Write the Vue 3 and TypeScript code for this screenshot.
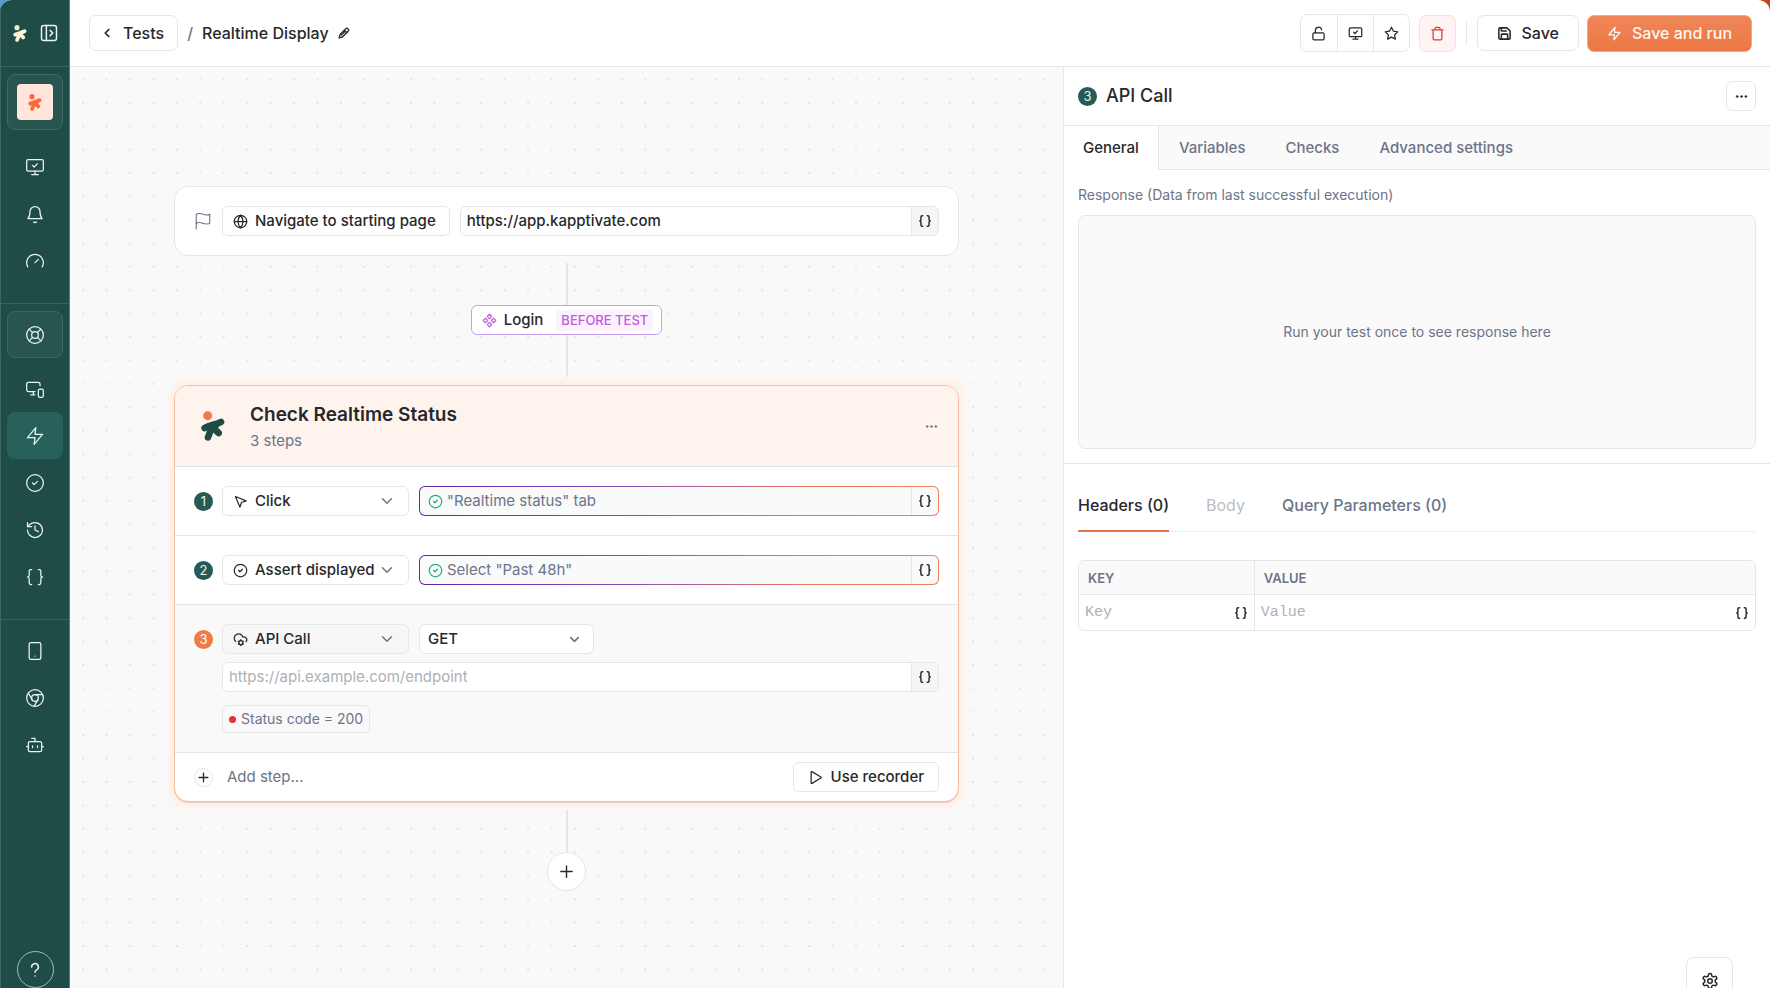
<script setup lang="ts">
import { h, ref } from 'vue'

const icons: Record<string, string> = {
  panel: '<rect x="2" y="2" width="20" height="20" rx="3"/><path d="M8.500 2v20M13.500 8.500l3.500 3.500-3.500 3.500"/>',
  monitorCheck: '<path d="m9 10 2 2 4-4"/><rect x="2" y="3" width="20" height="14" rx="2"/><path d="M12 17v4M8 21h8"/>',
  bell: '<path d="M10.300 21.500a2 2 0 0 0 3.400 0"/><path d="M3.500 17.500h17c-1.500-1.600-2.500-3.500-2.500-8.500a6 6 0 0 0-12 0c0 5-1 6.900-2.500 8.500z"/>',
  gauge: '<path d="m12 14 4-4"/><path d="M3.340 19a10 10 0 1 1 17.320 0"/>',
  buoy: '<circle cx="12" cy="12" r="10"/><circle cx="12" cy="12" r="4"/><path d="m4.930 4.930 4.240 4.240M14.830 9.170l4.240-4.240M14.830 14.830l4.240 4.240M9.170 14.830l-4.240 4.240"/>',
  devices: '<path d="M18 8V6a2 2 0 0 0-2-2H4a2 2 0 0 0-2 2v7a2 2 0 0 0 2 2h8"/><path d="M10 19v-4M7 19h5"/><rect x="16" y="12" width="6" height="10" rx="2"/>',
  zap: '<path d="M13 2 3 14h9l-1 8 10-12h-9z"/>',
  check: '<circle cx="12" cy="12" r="10"/><path d="m9 12 2 2 4-4"/>',
  history: '<path d="M3 12a9 9 0 1 0 9-9 9.750 9.750 0 0 0-6.740 2.740L3 8"/><path d="M3 3v5h5M12 7v5l4 2"/>',
  braces: '<path d="M8 3H7a2 2 0 0 0-2 2v5a2 2 0 0 1-2 2 2 2 0 0 1 2 2v5c0 1.100.9 2 2 2h1"/><path d="M16 21h1a2 2 0 0 0 2-2v-5c0-1.100.9-2 2-2a2 2 0 0 1-2-2V5a2 2 0 0 0-2-2h-1"/>',
  phone: '<rect x="5" y="2" width="14" height="20" rx="2"/><path d="M12 18h.01"/>',
  chrome: '<circle cx="12" cy="12" r="10"/><circle cx="12" cy="12" r="4"/><path d="M21.170 8H12M3.950 6.060 8.540 14M10.880 21.940 15.460 14"/>',
  bot: '<path d="M12 8V4H8"/><rect x="4" y="8" width="16" height="12" rx="2"/><path d="M2 14h2M20 14h2M15 13v2M9 13v2"/>',
  help: '<path d="M7.500 8a4.500 4.500 0 1 1 6.300 4.100c-1.200.6-1.800 1.300-1.800 2.900"/><path d="M12 20h.01"/>',
  chevronLeft: '<path d="m15 18-6-6 6-6"/>',
  chevronDown: '<path d="m6 9 6 6 6-6"/>',
  pencil: '<path d="M4 20l1.500-6L16 3.500a3 3 0 0 1 4.500 4.500L10 18.500z"/><path d="M13.500 6l4.500 4.500M8 15l7-7"/>',
  lockOpen: '<rect x="3" y="11" width="18" height="11" rx="2"/><path d="M7 11V7a5 5 0 0 1 9.900-1"/>',
  star: '<path d="M12 2l3.090 6.260L22 9.270l-5 4.870 1.180 6.880L12 17.770l-6.180 3.250L7 14.140 2 9.270l6.910-1.010z"/>',
  trash: '<path d="M3 6h18M19 6v14a2 2 0 0 1-2 2H7a2 2 0 0 1-2-2V6M8 6V4a2 2 0 0 1 2-2h4a2 2 0 0 1 2 2v2"/>',
  save: '<path d="M15.200 3a2 2 0 0 1 1.400.6l3.800 3.800a2 2 0 0 1 .6 1.400V19a2 2 0 0 1-2 2H5a2 2 0 0 1-2-2V5a2 2 0 0 1 2-2z"/><path d="M17 21v-7a1 1 0 0 0-1-1H8a1 1 0 0 0-1 1v7M7 3v4a1 1 0 0 0 1 1h7"/>',
  flag: '<path d="M3 15s1-1 4.500-1 5 2 9 2 4.500-1 4.500-1V3s-1 1-4.500 1-5-2-9-2S3 3 3 3z"/><path d="M3 22.500V15"/>',
  globe: '<circle cx="12" cy="12" r="10"/><path d="M12 2a14.500 14.500 0 0 0 0 20 14.500 14.500 0 0 0 0-20M2 12h20"/>',
  component: '<path d="M5.500 8.500 9 12l-3.500 3.500L2 12zM12 2l3.500 3.500L12 9 8.500 5.500zM18.500 8.500 22 12l-3.500 3.500L15 12zM12 15l3.500 3.500L12 22l-3.500-3.500z"/>',
  cursor: '<path d="m4 4 7.070 17 2.510-7.390L21 11.070z"/>',
  cloud: '<path d="M4.200 15.100A7 7 0 1 1 15.710 8h1.790a4.500 4.500 0 0 1 3.500 7.400"/><circle cx="12.500" cy="17" r="3.200"/><path d="M12.500 12.300v1.500M12.500 20.200v1.500M8.400 14.700l1.300.7M15.300 18.600l1.300.7M8.400 19.300l1.300-.7M15.300 15.400l1.300-.7"/>',
  play: '<path d="M5 3.500v17a1 1 0 0 0 1.500.9l14-8.500a1 1 0 0 0 0-1.800l-14-8.500A1 1 0 0 0 5 3.500z"/>',
  plus: '<path d="M12 4v16M4 12h16"/>',
  dots: '<g fill="currentColor"><circle cx="4" cy="12" r="1.800"/><circle cx="12" cy="12" r="1.800"/><circle cx="20" cy="12" r="1.800"/></g>',
  gear: '<path d="M12.220 2h-.44a2 2 0 0 0-2 2v.18a2 2 0 0 1-1 1.730l-.43.25a2 2 0 0 1-2 0l-.15-.08a2 2 0 0 0-2.730.73l-.22.38a2 2 0 0 0 .73 2.730l.15.1a2 2 0 0 1 1 1.720v.51a2 2 0 0 1-1 1.740l-.15.09a2 2 0 0 0-.73 2.730l.22.38a2 2 0 0 0 2.730.73l.15-.08a2 2 0 0 1 2 0l.43.25a2 2 0 0 1 1 1.730V20a2 2 0 0 0 2 2h.44a2 2 0 0 0 2-2v-.18a2 2 0 0 1 1-1.730l.43-.25a2 2 0 0 1 2 0l.15.08a2 2 0 0 0 2.730-.73l.22-.39a2 2 0 0 0-.73-2.730l-.15-.08a2 2 0 0 1-1-1.740v-.5a2 2 0 0 1 1-1.740l.15-.09a2 2 0 0 0 .73-2.730l-.22-.38a2 2 0 0 0-2.730-.73l-.15.08a2 2 0 0 1-2 0l-.43-.25a2 2 0 0 1-1-1.730V4a2 2 0 0 0-2-2z"/><circle cx="12" cy="12" r="3"/>',
}

interface IconProps { name: string; size?: number; weight?: number }

const Icon = (p: IconProps) =>
  h('svg', {
    class: 'icon', viewBox: '0 0 24 24', width: p.size ?? 20, height: p.size ?? 20,
    fill: 'none', stroke: 'currentColor', 'stroke-width': p.weight ?? 1.5,
    'stroke-linecap': 'round', 'stroke-linejoin': 'round', 'aria-hidden': 'true',
    innerHTML: icons[p.name],
  })
Icon.props = ['name', 'size', 'weight']

interface LogoProps { head: string; body: string; height: number }

const Runner = (p: LogoProps) =>
  h('svg', {
    class: 'icon', viewBox: '0 0 72 90', width: Math.round(p.height * 0.8), height: p.height, 'aria-hidden': 'true',
    innerHTML:
      `<circle cx="20" cy="14" r="13.500" fill="${p.head}"/>` +
      `<g fill="none" stroke="${p.body}" stroke-width="20" stroke-linecap="round" stroke-linejoin="round">` +
      '<path d="M11 51C24 42 40 43 60 33"/><path d="M33 47 21 79"/><path d="M44 42 40 54l13 12"/></g>',
  })
Runner.props = ['head', 'body', 'height']

const navMain = [
  { icon: 'monitorCheck', label: 'Monitoring' },
  { icon: 'bell', label: 'Alerts' },
  { icon: 'gauge', label: 'Dashboards' },
]
const navTest = [
  { icon: 'devices', label: 'Applications' },
  { icon: 'zap', label: 'Tests', active: true },
  { icon: 'check', label: 'Results' },
  { icon: 'history', label: 'History' },
  { icon: 'braces', label: 'Variables' },
]
const navDevice = [
  { icon: 'phone', label: 'Phones' },
  { icon: 'chrome', label: 'Browsers' },
  { icon: 'bot', label: 'Robots' },
]
const steps = [
  { n: 1, icon: 'cursor', action: 'Click', target: '"Realtime status" tab' },
  { n: 2, icon: 'check', action: 'Assert displayed', target: 'Select "Past 48h"' },
]
const tabs = ['General', 'Variables', 'Checks', 'Advanced settings']
const activeTab = ref('General')
const requestTabs = [
  { label: 'Headers (0)', disabled: false },
  { label: 'Body', disabled: true },
  { label: 'Query Parameters (0)', disabled: false },
]
const activeRequestTab = ref('Headers (0)')
const startUrl = ref('https://app.kapptivate.com')
const endpoint = ref('')
const headerKey = ref('')
const headerValue = ref('')
</script>

<template>
  <div class="app">
    <aside class="sidebar">
      <div class="brand">
        <Runner head="#e8efc8" body="#fbf6d6" :height="17" />
        <button class="bare" aria-label="Expand sidebar"><Icon name="panel" :size="18" :weight="2" /></button>
      </div>
      <button class="workspace" aria-label="Workspace">
        <span class="tile"><Runner head="#fb6b35" body="#fb6b35" :height="17" /></span>
      </button>
      <nav class="nav nav-main">
        <a v-for="i in navMain" :key="i.icon" href="#" class="nav-item" :aria-label="i.label"><Icon :name="i.icon" /></a>
      </nav>
      <nav class="nav nav-test">
        <a href="#" class="nav-item outlined" aria-label="Support"><Icon name="buoy" /></a>
        <a v-for="i in navTest" :key="i.icon" href="#" class="nav-item" :class="{ active: i.active }" :aria-label="i.label"><Icon :name="i.icon" /></a>
      </nav>
      <nav class="nav nav-device">
        <a v-for="i in navDevice" :key="i.icon" href="#" class="nav-item" :aria-label="i.label"><Icon :name="i.icon" /></a>
      </nav>
      <button class="help" aria-label="Help"><Icon name="help" :size="18" :weight="2" /></button>
    </aside>

    <div class="main">
      <header class="topbar">
        <a href="#" class="btn back"><Icon name="chevronLeft" :size="14" :weight="3" />Tests</a>
        <span class="slash">/</span>
        <h1 class="crumb">Realtime Display</h1>
        <button class="bare edit" aria-label="Rename"><Icon name="pencil" :size="13" :weight="2.500" /></button>
        <div class="actions">
          <div class="group">
            <button aria-label="Unlock"><Icon name="lockOpen" :size="15" :weight="2" /></button>
            <button aria-label="Monitor"><Icon name="monitorCheck" :size="15" :weight="2" /></button>
            <button aria-label="Favourite"><Icon name="star" :size="15" :weight="2" /></button>
          </div>
          <button class="danger" aria-label="Delete"><Icon name="trash" :size="15" :weight="2" /></button>
          <span class="rule"></span>
          <button class="btn save"><Icon name="save" :size="15" :weight="2.500" />Save</button>
          <button class="btn primary"><Icon name="zap" :size="15" :weight="2" />Save and run</button>
        </div>
      </header>

      <div class="work">
        <main class="canvas">
          <svg class="dots" aria-hidden="true">
            <defs>
              <pattern id="grid" x="1.500" y="0.700" width="23.420" height="23.420" patternUnits="userSpaceOnUse">
                <circle cx="11.700" cy="11.700" r="1" fill="#dcdfe1" />
              </pattern>
            </defs>
            <rect width="100%" height="100%" fill="url(#grid)" />
          </svg>

          <div class="flow">
            <section class="card start">
              <Icon name="flag" :size="18" class="muted" />
              <span class="chip"><Icon name="globe" :size="15" :weight="2" />Navigate to starting page</span>
              <div class="field grow">
                <input v-model="startUrl" aria-label="Starting page URL" />
                <button class="vars" aria-label="Insert variable"><Icon name="braces" :size="14" :weight="2.500" /></button>
              </div>
            </section>
            <div class="line after"></div>
            <a href="#" class="before"><Icon name="component" :size="15" :weight="2" />Login<span class="tag">BEFORE TEST</span></a>
            <div class="line ahead"></div>

            <section class="card selected">
              <header class="card-head">
                <Runner head="#ee7c4a" body="#1f4c47" :height="30" />
                <div class="heading">
                  <h2>Check Realtime Status</h2>
                  <p>3 steps</p>
                </div>
                <button class="bare muted" aria-label="More"><Icon name="dots" :size="13" :weight="1" /></button>
              </header>

              <div v-for="s in steps" :key="s.n" class="step">
                <span class="num">{{ s.n }}</span>
                <div class="step-row">
                  <label class="select action">
                    <Icon :name="s.icon" :size="15" :weight="2" />
                    <select :aria-label="'Action of step ' + s.n"><option>{{ s.action }}</option></select>
                    <Icon name="chevronDown" :size="18" class="muted" :weight="2" />
                  </label>
                  <div class="field smart grow">
                    <button class="target"><Icon name="check" :size="15" :weight="2" class="ok" />{{ s.target }}</button>
                    <button class="vars" aria-label="Insert variable"><Icon name="braces" :size="14" :weight="2.500" /></button>
                  </div>
                </div>
              </div>

              <div class="step current">
                <span class="num">3</span>
                <div class="step-body">
                  <div class="step-row">
                    <label class="select action">
                      <Icon name="cloud" :size="15" :weight="2" />
                      <select aria-label="Action of step 3"><option>API Call</option></select>
                      <Icon name="chevronDown" :size="18" class="muted" :weight="2" />
                    </label>
                    <label class="select method">
                      <select aria-label="HTTP method"><option>GET</option></select>
                      <Icon name="chevronDown" :size="15" class="muted" :weight="2.500" />
                    </label>
                  </div>
                  <div class="field">
                    <input v-model="endpoint" placeholder="https://api.example.com/endpoint" aria-label="Endpoint URL" />
                    <button class="vars" aria-label="Insert variable"><Icon name="braces" :size="14" :weight="2.500" /></button>
                  </div>
                  <span class="status"><i class="bullet"></i>Status code = 200</span>
                </div>
              </div>

              <footer class="card-foot">
                <button class="add"><span class="add-icon"><Icon name="plus" :size="13" :weight="2.500" /></span>Add step...</button>
                <button class="chip recorder"><Icon name="play" :size="15" :weight="2" />Use recorder</button>
              </footer>
            </section>

            <div class="line tail"></div>
            <button class="add-node" aria-label="Add block"><Icon name="plus" :size="17" :weight="2" /></button>
          </div>
        </main>

        <aside class="panel">
          <header class="panel-head">
            <span class="num">3</span>
            <h2>API Call</h2>
            <button class="more" aria-label="More"><Icon name="dots" :size="13" :weight="1" /></button>
          </header>
          <div class="tabs" role="tablist">
            <button v-for="t in tabs" :key="t" role="tab" :aria-selected="t === activeTab" :class="{ on: t === activeTab }" @click="activeTab = t">{{ t }}</button>
          </div>
          <section class="response">
            <h3>Response (Data from last successful execution)</h3>
            <div class="empty">Run your test once to see response here</div>
          </section>
          <section class="request">
            <div class="subtabs" role="tablist">
              <button v-for="t in requestTabs" :key="t.label" role="tab" :disabled="t.disabled" :aria-selected="t.label === activeRequestTab" :class="{ on: t.label === activeRequestTab }" @click="activeRequestTab = t.label">{{ t.label }}</button>
            </div>
            <table class="params">
              <thead><tr><th class="key">KEY</th><th>VALUE</th></tr></thead>
              <tbody>
                <tr>
                  <td>
                    <div class="cell"><input v-model="headerKey" placeholder="Key" aria-label="Key" /><button class="bare" aria-label="Insert variable"><Icon name="braces" :size="14" :weight="2.500" /></button></div>
                  </td>
                  <td>
                    <div class="cell"><input v-model="headerValue" placeholder="Value" aria-label="Value" /><button class="bare" aria-label="Insert variable"><Icon name="braces" :size="14" :weight="2.500" /></button></div>
                  </td>
                </tr>
              </tbody>
            </table>
          </section>
        </aside>
      </div>
    </div>
    <button class="settings" aria-label="Settings"><Icon name="gear" :size="18" :weight="2" /></button>
  </div>
</template>

<style>
body { margin: 0; background: linear-gradient(90deg, #5b9bd5, #c9431c); }
</style>

<style scoped>
.app {
  --line: #e4e6e8; --ink: #26282c; --slate: #6d7489; --soft: #fafafa; --green: #265a54;
  display: flex; height: 100vh; overflow: hidden; position: relative;
  border-radius: 12px 12px 0 0; background: #fff; color: var(--ink);
  font-family: Inter, "Liberation Sans", sans-serif; font-size: 15px; line-height: 20px; font-weight: 500;
}
.app *, .app *::before { box-sizing: border-box; }
button, input, select { font: inherit; color: inherit; margin: 0; padding: 0; }
button { background: none; border: 0; cursor: pointer; white-space: nowrap; }
a { color: inherit; text-decoration: none; white-space: nowrap; }
h1, h2, h3, p { margin: 0; font-weight: 500; }
.icon { flex: none; display: block; }
.bare { display: flex; }
.muted { color: var(--slate); }
.grow { flex: 1; }

.sidebar {
  width: 70px; flex: none; display: flex; flex-direction: column; background: #1f4c47; color: #e9f5f2;
  border: solid #5d7f7b; border-width: 0 1px; border-left-color: #3d6661;
}
.brand { height: 66px; display: flex; align-items: center; gap: 13px; padding: 0 12px; flex: none; box-shadow: 0 1px #3b625e; }
.workspace { margin: 8px 6px 0; height: 56px; flex: none; display: grid; place-items: center; border: 1px solid #416a65; border-radius: 8px; background: #285550; }
.tile { width: 36px; height: 36px; display: grid; place-items: center; border-radius: 4px; background: #ffe5dc; }
.nav { display: flex; flex-direction: column; flex: none; }
.nav-item { height: 47px; display: grid; place-items: center; border-radius: 8px; }
.nav-main { padding: 13px 6px 19px; }
.nav-test { padding: 7px 6px 19px; border-top: 1px solid #3b625e; }
.nav-device { padding: 7px 6px 0; border-top: 1px solid #3b625e; }
.nav-item.outlined { border: 1px solid #3f6762; background: #285550; margin-bottom: 7px; }
.nav-item.active { background: #28605a; }
.help { width: 37px; height: 37px; margin: auto auto 0; flex: none; display: grid; place-items: center; border: 1px solid #a5bbb8; border-radius: 50%; }

.main { flex: 1; min-width: 0; display: flex; flex-direction: column; }
.topbar { height: 67px; flex: none; display: flex; align-items: center; padding: 0 18px 0 19px; border-bottom: 1px solid var(--line); font-size: 16px; }
.btn { height: 36px; display: flex; align-items: center; border: 1px solid var(--line); border-radius: 7px; background: #fff; }
.back { gap: 9px; padding: 0 13px 0 10px; }
.slash { margin: 0 9px; color: var(--slate); }
.crumb { font-size: 16px; white-space: nowrap; }
.edit { margin-left: 8px; }
.actions { margin-left: auto; display: flex; align-items: center; }
.group { display: flex; height: 38px; border: 1px solid var(--line); border-radius: 7px; }
.group button { width: 36px; display: grid; place-items: center; }
.group button + button { border-left: 1px solid var(--line); }
.danger { width: 37px; height: 37px; margin-left: 9px; display: grid; place-items: center; border: 1px solid #fbdfdf; border-radius: 7px; background: #fff3f3; color: #d93a34; }
.rule { width: 1px; height: 23px; margin: 0 10px; background: var(--line); }
.save { padding: 0 19px; gap: 10px; }
.primary { height: 37px; margin-left: 8px; padding: 0 19px; gap: 10px; color: #fff5ee; border-color: #f4a988; background: linear-gradient(#f08659, #ec7844); }

.work { flex: 1; min-height: 0; display: flex; }
.canvas { flex: 993; min-width: 0; position: relative; background: #f9f9f9; overflow: hidden; }
.dots { position: absolute; inset: 0; width: 100%; height: 100%; }
.flow { position: relative; display: flex; flex-direction: column; align-items: center; padding: 119px 104px 0; }
.card { width: 100%; border: 1px solid var(--line); border-radius: 14px; background: #fff; }
.start { display: flex; align-items: center; gap: 10px; padding: 19px; }
.chip { height: 30px; display: flex; align-items: center; gap: 7px; padding: 0 13px 0 10px; border: 1px solid var(--line); border-radius: 6px; background: #fff; white-space: nowrap; }
.field { height: 30px; min-width: 0; display: flex; border: 1px solid var(--line); border-radius: 6px; background: #fff; overflow: hidden; }
input { flex: 1; min-width: 0; width: 100%; border: 0; outline: 0; background: none; padding-left: 6px; }
input::placeholder { color: #adb1b5; font-weight: 400; opacity: 1; }
.vars { width: 27px; flex: none; display: grid; place-items: center; border-left: 1px solid var(--line); background: #f4f5f6; }
.line { width: 2px; height: 42px; background: #e4e5e6; }
.line.after { margin-top: 7px; }
.line.ahead { margin-bottom: 8px; }
.line.tail { margin-top: 8px; }
.before { height: 30px; display: flex; align-items: center; gap: 7px; padding: 0 8px 0 10px; border: 1px solid #c79df0; border-radius: 6px; background: #fff; }
.before .icon { color: #c95be8; }
.tag { height: 21px; margin-left: 6px; padding: 0 5px; border-radius: 4px; background: #fbf2fe; color: #c35be0; font-size: 13px; }
.selected { border-color: #f6bd9f; box-shadow: 0 1px 0 #f0d0c0, 0 0 0 4px #fff0e8, 0 0 6px 6px #fdf3ee; }
.card-head { height: 81px; display: flex; align-items: center; padding: 0 20px 0 26px; gap: 25px; border-radius: 13px 13px 0 0; background: #fff3ee; border-bottom: 1px solid #e2e2e2; }
.heading { flex: 1; padding-top: 2px; }
.heading h2 { font-size: 19px; line-height: 26px; font-weight: 600; }
.heading p { line-height: 25px; font-weight: 400; color: var(--slate); }
.step { display: flex; gap: 9px; padding: 19px; border-bottom: 1px solid #e2e4e5; }
.step-row { flex: 1; min-width: 0; display: flex; gap: 10px; }
.step-body { flex: 1; min-width: 0; display: flex; flex-direction: column; gap: 8px; }
.num { width: 19px; height: 19px; flex: none; margin-top: 6px; border-radius: 50%; background: var(--green); color: #eaf5f2; font-size: 13px; line-height: 19px; font-weight: 400; text-align: center; }
.current { background: #f9f9f9; }
.current .num { background: #ee7c48; color: #fff; }
.select { height: 30px; display: flex; align-items: center; border: 1px solid var(--line); border-radius: 6px; background: #fff; }
.select select { flex: 1; min-width: 0; border: 0; outline: 0; background: none; appearance: none; }
.action { width: 187px; padding: 0 12px 0 10px; }
.action select { margin-left: 7px; }
.current .action { background: #f6f6f7; }
.method { width: 175px; padding: 0 11px 0 8px; }
.smart { border: 1px solid transparent; background: linear-gradient(#f9fafa, #f9fafa) padding-box, linear-gradient(90deg, #5d25b8, #8a4fb0 40%, #e8775c 75%, #ee8060) border-box; }
.smart .vars { background: none; }
.target { flex: 1; min-width: 0; display: flex; align-items: center; gap: 4px; padding-left: 8px; font-weight: 400; color: var(--slate); }
.ok { color: #22b07d; }
.status { align-self: flex-start; height: 28px; margin-top: 5px; display: flex; align-items: center; gap: 5px; padding: 0 6px; border: 1px solid var(--line); border-radius: 5px; font-size: 14px; font-weight: 400; color: var(--slate); white-space: nowrap; }
.bullet { width: 7px; height: 7px; border-radius: 50%; background: #dc3530; }
.card-foot { display: flex; align-items: center; justify-content: space-between; padding: 9px 19px; }
.add { display: flex; align-items: center; gap: 14px; font-weight: 400; color: var(--slate); }
.add-icon { width: 19px; height: 19px; display: grid; place-items: center; border: 1px solid var(--line); border-radius: 50%; color: var(--ink); }
.recorder { padding: 0 14px; gap: 8px; }
.add-node { width: 39px; height: 39px; display: grid; place-items: center; border: 1px solid var(--line); border-radius: 50%; background: #fff; }

.panel { flex: 706; min-width: 0; border-left: 1px solid var(--line); background: #fff; }
.panel-head { height: 59px; display: flex; align-items: center; gap: 9px; padding: 0 14px; border-bottom: 1px solid var(--line); }
.panel-head .num { margin: 0; }
.panel-head h2 { font-size: 18px; line-height: 24px; }
.more { width: 30px; height: 30px; margin-left: auto; display: grid; place-items: center; border: 1px solid var(--line); border-radius: 6px; }
.tabs { height: 44px; display: flex; background: var(--soft); box-shadow: inset 0 -1px var(--line); }
.tabs button { padding: 0 20px; color: var(--slate); }
.tabs .on { padding: 0 19px; background: #fff; color: var(--ink); border-right: 1px solid var(--line); }
.response { padding: 15px 14px 14px; border-bottom: 1px solid var(--line); }
.response h3 { font-size: 14px; line-height: 20px; font-weight: 400; color: var(--slate); }
.empty { height: 234px; margin-top: 10px; display: grid; place-items: center; border: 1px solid var(--line); border-radius: 7px; background: var(--soft); color: var(--slate); font-size: 14px; font-weight: 400; }
.request { padding: 16px 14px; }
.subtabs { height: 52px; display: flex; gap: 37px; box-shadow: inset 0 -1px #eceeef; font-size: 16px; }
.subtabs button { color: var(--slate); border-bottom: 2px solid transparent; }
.subtabs .on { color: var(--ink); border-color: #e8734a; }
.subtabs button:disabled { color: #b9bdc2; font-weight: 400; }
.params { width: 100%; margin-top: 28px; border: 1px solid var(--line); border-radius: 6px; border-spacing: 0; table-layout: fixed; overflow: hidden; }
.params th { height: 34px; padding: 0 9px; text-align: left; font-size: 13px; font-weight: 600; color: var(--slate); background: var(--soft); border-bottom: 1px solid var(--line); }
.params .key { width: 26%; }
.params td { height: 35px; padding: 0; }
.params tr > :first-child { border-right: 1px solid var(--line); }
.cell { display: flex; align-items: center; padding-right: 6px; font-family: "Liberation Mono", monospace; }
.settings { position: absolute; right: 37px; bottom: -16px; width: 47px; height: 47px; display: grid; place-items: center; border: 1px solid var(--line); border-radius: 8px; background: #fff; }
</style>
